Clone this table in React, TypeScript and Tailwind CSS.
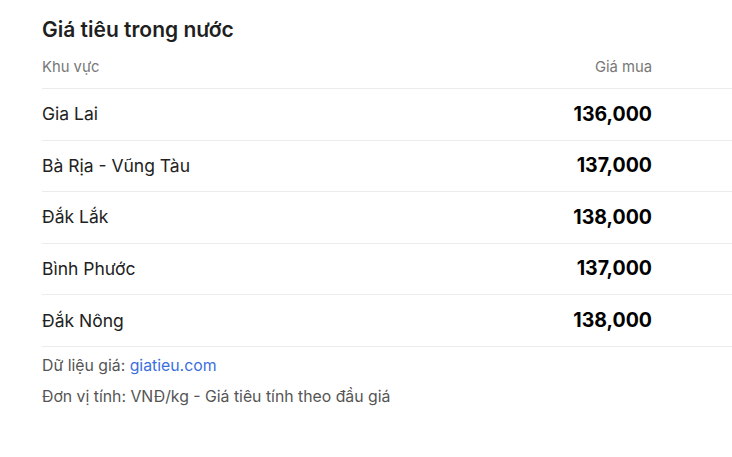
import React from "react";

const rows = [
  { name: "Gia Lai", price: "136,000" },
  { name: "Bà Rịa - Vũng Tàu", price: "137,000" },
  { name: "Đắk Lắk", price: "138,000" },
  { name: "Bình Phước", price: "137,000" },
  { name: "Đắk Nông", price: "138,000" },
];

export default function App() {
  return (
    <div className="bg-white w-[732px] h-[457px] pl-[42px] pt-[16px]" style={{ fontFamily: "Inter, 'Noto Sans', sans-serif" }}>
      <h2 className="text-[21px] font-semibold text-[#1f1f1f] leading-[28px]">Giá tiêu trong nước</h2>
      <div className="mt-[11px] flex justify-between items-center h-[34px] border-b border-[#ececec] text-[14.8px] text-[#777] pr-[80px] pb-[8px]">
        <span>Khu vực</span>
        <span>Giá mua</span>
      </div>
      {rows.map((r) => (
        <div key={r.name} className="flex justify-between items-center h-[51.6px] border-b border-[#ececec] pr-[80px]">
          <span className="text-[17.5px] text-[#222]">{r.name}</span>
          <span className="text-[19.5px] font-bold text-black">{r.price}</span>
        </div>
      ))}
      <div className="mt-[8px] text-[15.8px] text-[#555] leading-[22px]">
        Dữ liệu giá: <span className="text-[#3b6fe0]">giatieu.com</span>
      </div>
      <div className="mt-[9px] text-[15.8px] text-[#555] leading-[22px]">Đơn vị tính: VNĐ/kg - Giá tiêu tính theo đầu giá</div>
    </div>
  );
}
